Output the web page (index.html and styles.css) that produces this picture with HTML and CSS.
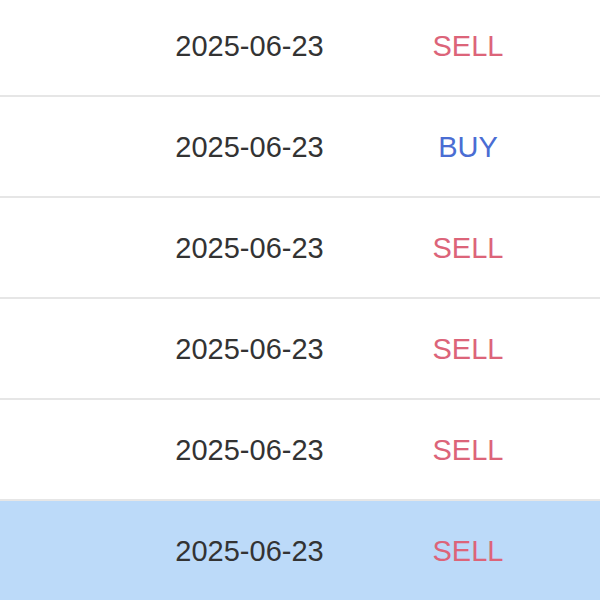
FILE: index.html
```html
<!DOCTYPE html>
<html>
<head>
<meta charset="utf-8">
<link rel="stylesheet" href="styles.css">
</head>
<body>
<div class="list">
  <div class="row"><span></span><span class="date">2025-06-23</span><span class="side sell">SELL</span></div>
  <div class="row"><span></span><span class="date">2025-06-23</span><span class="side buy">BUY</span></div>
  <div class="row"><span></span><span class="date">2025-06-23</span><span class="side sell">SELL</span></div>
  <div class="row"><span></span><span class="date">2025-06-23</span><span class="side sell">SELL</span></div>
  <div class="row"><span></span><span class="date">2025-06-23</span><span class="side sell">SELL</span></div>
  <div class="row selected"><span></span><span class="date">2025-06-23</span><span class="side sell">SELL</span></div>
</div>
</body>
</html>
```
FILE: styles.css
```css
html, body {
  margin: 0;
  padding: 0;
  background: #ffffff;
  overflow: hidden;
}
.list {
  margin-top: -4px;
  font-family: "Liberation Sans", Arial, sans-serif;
  font-size: 29px;
  color: #333333;
}
.row {
  display: grid;
  grid-template-columns: 140px 219px 218px 1fr;
  align-items: center;
  box-sizing: border-box;
  height: 101px;
  padding-top: 2px;
  border-bottom: 2px solid #e6e6e6;
  text-align: center;
}
.row.selected {
  background: #bcdaf9;
  border-bottom-color: #bcdaf9;
}
.sell { color: #dc6479; }
.buy { color: #4a6dd3; }
```
